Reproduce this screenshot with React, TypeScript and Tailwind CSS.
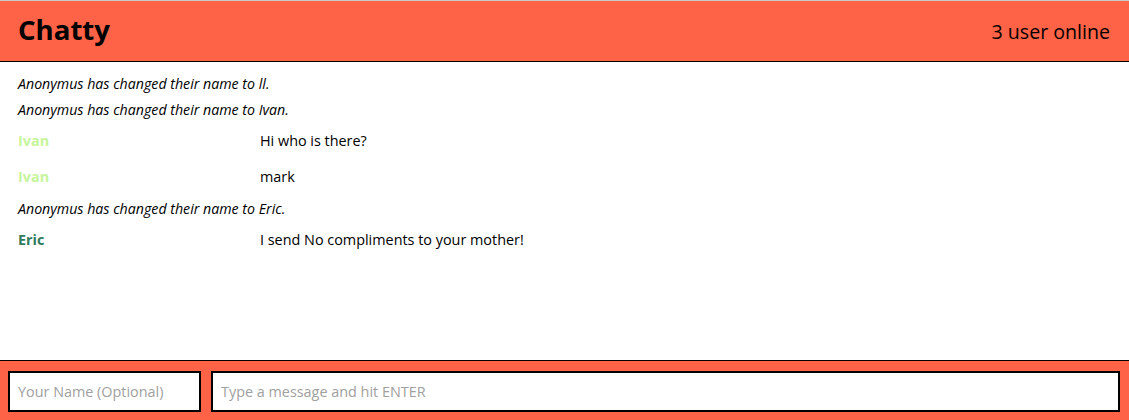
import { useState } from "react";

type Msg =
  | { kind: "system"; text: string }
  | { kind: "user"; name: string; color: string; text: string };

const messages: Msg[] = [
  { kind: "system", text: "Anonymus has changed their name to ll." },
  { kind: "system", text: "Anonymus has changed their name to Ivan." },
  { kind: "user", name: "Ivan", color: "text-[#c6f59b]", text: "Hi who is there?" },
  { kind: "user", name: "Ivan", color: "text-[#c6f59b]", text: "mark" },
  { kind: "system", text: "Anonymus has changed their name to Eric." },
  { kind: "user", name: "Eric", color: "text-[#2f7a5c]", text: "I send No compliments to your mother!" },
];

export default function App() {
  const [name, setName] = useState("");
  const [draft, setDraft] = useState("");

  return (
    <div className="h-[420px] w-full flex flex-col bg-white text-black font-['Open_Sans',sans-serif]">
      <nav className="h-[62px] shrink-0 flex items-center justify-between pl-[18px] pr-[19px] bg-[#ff6347] border-t border-[#c8c8c8] border-b border-b-black">
        <a className="text-[27.6px] font-bold leading-none pb-[2px]">Chatty</a>
        <span className="text-[19.6px] leading-none pt-[2px]">3 user online</span>
      </nav>

      <main className="flex-1 pt-[9px] px-[18px] text-[14.4px]">
        {messages.map((m, i) =>
          m.kind === "system" ? (
            <div
              key={i}
              className={`flex items-center italic text-[14.2px] ${i > 0 && messages[i - 1].kind === "user" ? "h-[27px]" : "h-[26px]"}`}
            >
              {m.text}
            </div>
          ) : (
            <div key={i} className="flex items-center h-[36px]">
              <span className={`w-[242px] shrink-0 font-bold ${m.color}`}>{m.name}</span>
              <span>{m.text}</span>
            </div>
          )
        )}
      </main>

      <footer className="h-[60px] shrink-0 flex items-start gap-[10px] pt-[10px] pl-[8px] pr-[9px] bg-[#ff6347] border-t border-black">
        <input
          value={name}
          onChange={(e) => setName(e.target.value)}
          placeholder="Your Name (Optional)"
          className="w-[193px] h-[41px] px-[8px] bg-white border-2 border-black text-[14.4px] outline-none placeholder:text-[#a0a0a0]"
        />
        <input
          value={draft}
          onChange={(e) => setDraft(e.target.value)}
          placeholder="Type a message and hit ENTER"
          className="flex-1 h-[41px] px-[8px] bg-white border-2 border-black text-[14.4px] outline-none placeholder:text-[#a0a0a0]"
        />
      </footer>
    </div>
  );
}
